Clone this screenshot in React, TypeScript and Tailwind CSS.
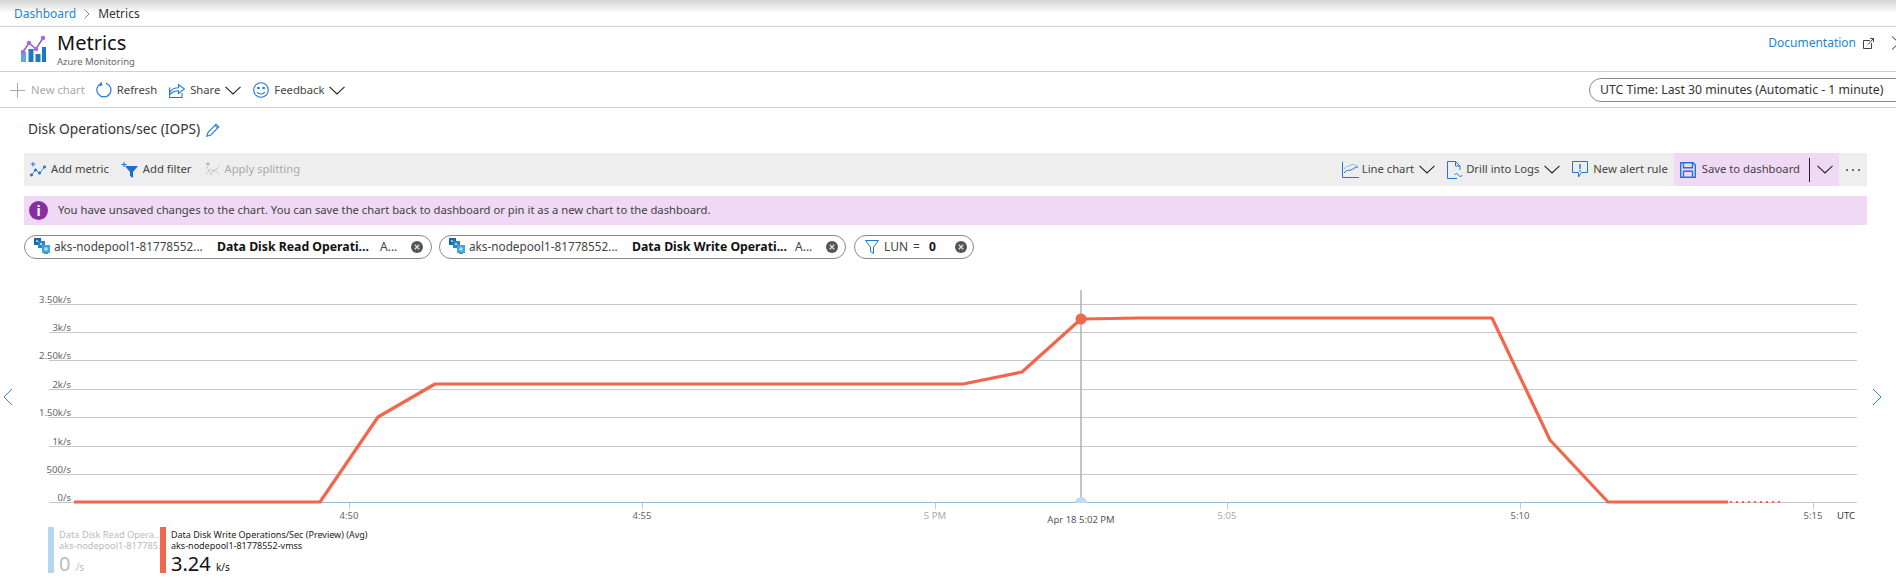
import React from "react";

const Chev = ({ className = "" }: { className?: string }) => (
  <svg width="16" height="9" viewBox="0 0 16 9" fill="none" stroke="#222" strokeWidth="1.1" className={className}>
    <path d="M.5 .8 8 8 15.5 .8" />
  </svg>
);

const Close = ({ className = "" }: { className?: string }) => (
  <svg width="12" height="12" viewBox="0 0 12 12" className={className}>
    <circle cx="6" cy="6" r="6" fill="#555" />
    <path d="M3.8 3.8 8.2 8.2M8.2 3.8 3.8 8.2" stroke="#ddd" strokeWidth="1.3" />
  </svg>
);

const Vmss = () => (
  <svg width="16" height="16" viewBox="0 0 16 16" className="shrink-0">
    <rect x="0" y="0" width="7" height="7" fill="#1668b0" />
    <rect x="4" y="3" width="7" height="7" fill="#2a86cf" />
    <rect x="8" y="7" width="8" height="8" fill="#3fa4e0" />
    <rect x="2" y="2" width="2" height="2" fill="#8cc8ef" />
    <rect x="6" y="5" width="2" height="2" fill="#a5dcf2" />
    <rect x="10.5" y="9.5" width="3" height="3" fill="#b9e6f7" />
    <rect x="10" y="15" width="4" height="1" fill="#7a7a7a" />
  </svg>
);

const MetricChip = ({ name, w }: { name: string; w: string }) => (
  <div className={`flex items-center h-[24px] rounded-full border border-[#8a8a8a] pl-[9px] ${w}`}>
    <div className="-mt-[3px]"><Vmss /></div>
    <span className="ml-[4px] w-[163px] whitespace-nowrap text-[11.75px]">aks-nodepool1-81778552...</span>
    <span className="font-bold text-[#111] whitespace-nowrap w-[163px] text-[12.25px]">{name}</span>
    <span className="w-[31px] whitespace-nowrap">A...</span>
    <Close />
  </div>
);

const yLabels = [
  ["3.50k/s", 304], ["3k/s", 332], ["2.50k/s", 360], ["2k/s", 389],
  ["1.50k/s", 417], ["1k/s", 446], ["500/s", 474],
] as const;

const xTicks: [string, number, string][] = [
  ["4:50", 349, "#666"], ["4:55", 642, "#666"], ["5 PM", 935, "#aaa"],
  ["5:05", 1227, "#aaa"], ["5:10", 1520, "#666"], ["5:15", 1813, "#666"],
];

const Chart = () => (
  <svg width="1896" height="248" viewBox="0 280 1896 248" className="block" fontFamily="'Noto Sans', sans-serif">
    {yLabels.map(([t, y]) => (
      <g key={t}>
        <line x1="49" x2="1857" y1={y + 0.5} y2={y + 0.5} stroke="#c8c8c8" strokeWidth="1" />
        <text x="71" y={y - 1} textAnchor="end" fontSize="9.5" fill="#666">{t}</text>
      </g>
    ))}
    <text x="71" y="501" textAnchor="end" fontSize="9.5" fill="#666">0/s</text>
    <line x1="49" x2="1857" y1="502.5" y2="502.5" stroke="#c8c8c8" />
    <line x1="74" x2="1728" y1="502.5" y2="502.5" stroke="#94b8d8" />
    {xTicks.map(([t, x, c]) => (
      <g key={t}>
        <line x1={x + 0.5} x2={x + 0.5} y1="503" y2="509" stroke="#c8c8c8" />
        <text x={x} y="519" textAnchor="middle" fontSize="9.5" fill={c}>{t}</text>
      </g>
    ))}
    <text x="1855" y="519" textAnchor="end" fontSize="9.5" fill="#333">UTC</text>
    <line x1="1081" x2="1081" y1="290" y2="503" stroke="#b0b0b0" strokeWidth="1.5" />
    <path d="M1075 503a6 6 0 0 1 12 0z" fill="#bcdcf3" />
    <circle cx="1081" cy="319" r="5.5" fill="#f2674b" />
    <polyline
      points="74,502 320,502 378,417 435,384 963,384 1022,372 1081,319 1140,318 1300,318 1492,318 1550,440 1608,502 1728,502"
      fill="none" stroke="#f2674b" strokeWidth="3.2" strokeLinejoin="round" />
    <line x1="1730" x2="1783" y1="502" y2="502" stroke="#f2674b" strokeWidth="2" strokeDasharray="2 4" />
    <text x="1081" y="523" textAnchor="middle" fontSize="9.5" fill="#555">Apr 18 5:02 PM</text>
  </svg>
);

export default function App() {
  return (
    <div className="relative w-[1896px] h-[584px] overflow-hidden bg-white text-[11.25px] text-[#444] font-['Noto_Sans',sans-serif]">
      {/* Breadcrumb */}
      <div className="h-[27px] flex items-center pl-[14px] pt-[2px] border-b border-[#cfcfcf] bg-gradient-to-b from-[#d4d4d4] via-white to-white via-50% gap-[8px] text-[12px]">
        <span className="text-[#1b85d8]">Dashboard</span>
        <svg width="6" height="10" viewBox="0 0 6 10" fill="none" stroke="#888"><path d="M.5 .5 5 5 .5 9.5" /></svg>
        <span className="text-[#333]">Metrics</span>
      </div>

      {/* Header */}
      <div className="h-[45px] flex border-b border-[#cfcfcf]">
        <svg width="26" height="28" viewBox="0 0 26 28" className="ml-[20px] mt-[8px] shrink-0">
          <rect x="1" y="17" width="5" height="10" fill="#5ea8e0" />
          <rect x="8.5" y="14" width="5" height="13" fill="#1e78c8" />
          <rect x="15.5" y="19" width="5" height="8" fill="#1e78c8" />
          <rect x="22" y="12" width="4" height="15" fill="#1e78c8" />
          <polyline points="3,17 9,8 16,14 23,3" fill="none" stroke="#9a5fd8" strokeWidth="1.6" />
          <circle cx="3" cy="17" r="2.3" fill="#a66be0" />
          <circle cx="9" cy="8" r="2.3" fill="#a66be0" />
          <circle cx="16" cy="14" r="2.3" fill="#a66be0" />
          <circle cx="23" cy="3" r="2.3" fill="#a66be0" />
        </svg>
        <div className="ml-[11px] mt-[3px]">
          <div className="text-[20px] leading-[26px] text-[#111]">Metrics</div>
          <div className="text-[9.5px] leading-[12px] text-[#666]">Azure Monitoring</div>
        </div>
        <div className="ml-auto flex items-start pt-[7px] text-[12px]">
          <span className="text-[#1b85d8] leading-[18px]">Documentation</span>
          <svg width="11" height="11" viewBox="0 0 11 11" fill="none" stroke="#444" className="ml-[7px] mt-[4px]">
            <path d="M7 2.5H.5v8h8V5M5 6.5 10.5.5M7 .5h3.5V4" />
          </svg>
          <svg width="4" height="14" viewBox="0 0 4 14" fill="none" stroke="#333" className="ml-[18px] mt-[2px]">
            <path d="M0 .5 7 7 0 13.5" />
          </svg>
        </div>
      </div>

      {/* Command bar */}
      <div className="h-[36px] flex items-center border-b border-[#cfcfcf] pl-[10px] pt-[1px]">
        <svg width="15" height="15" viewBox="0 0 15 15" stroke="#aaa"><path d="M7.5 0v15M0 7.5h15" /></svg>
        <span className="ml-[6px] text-[#aaa]">New chart</span>
        <svg width="16" height="16" viewBox="0 0 16 16" fill="none" stroke="#1b78d8" strokeWidth="1.2" className="ml-[11px]">
          <path d="M5.5 1.3A7 7 0 1 0 10 1.2M5 .3l.8 2.6-2.4.7" />
        </svg>
        <span className="ml-[5px]">Refresh</span>
        <svg width="16" height="16" viewBox="0 0 16 16" fill="none" stroke="#1b78d8" strokeWidth="1.1" className="ml-[12px]">
          <path d="M.6 5.5v10h12.5V11M.6 10.5C3 6.5 6 5.8 9.5 5.8V2.5L15.5 7l-6 4.5V8.8c-3 0-6 .6-8.9 4" />
        </svg>
        <span className="ml-[5px]">Share</span>
        <Chev className="ml-[5px]" />
        <svg width="16" height="16" viewBox="0 0 16 16" fill="none" stroke="#1b78d8" strokeWidth="1.1" className="ml-[12px]">
          <circle cx="8" cy="8" r="7.3" />
          <path d="M4 10c2 2.6 6 2.6 8 0" />
          <circle cx="5.4" cy="6" r=".8" fill="#1b78d8" />
          <circle cx="10.6" cy="6" r=".8" fill="#1b78d8" />
        </svg>
        <span className="ml-[5px]">Feedback</span>
        <Chev className="ml-[5px]" />
        <div className="ml-auto h-[24px] w-[320px] shrink-0 -mr-[13px] rounded-full border border-[#8a8a8a] flex items-center pl-[10px] text-[#333] whitespace-nowrap text-[12.25px]">
          UTC Time: Last 30 minutes (Automatic - 1 minute)
        </div>
      </div>

      {/* Title */}
      <div className="flex items-center h-[45px] pl-[28px] pb-[2px] text-[#333] text-[13.75px]">
        <span>Disk Operations/sec (IOPS)</span>
        <svg width="14" height="14" viewBox="0 0 14 14" fill="none" stroke="#1b78d8" strokeWidth="1.1" className="ml-[6px]">
          <path d="M.8 13.2 2 9.5 10 1.2l2.8 2.6-8 8.2zM9 2.3l2.7 2.6" />
        </svg>
      </div>

      {/* Toolbar */}
      <div className="mx-[24px] mr-[29px] h-[33px] bg-[#eeeeee] flex items-stretch pl-[6px] text-[#444]">
        <div className="flex items-center">
          <svg width="16" height="15" viewBox="0 0 16 15" fill="none" stroke="#1b78d8">
            <path d="M1.5 13 5.5 8l4 3 5-6" strokeWidth=".8" />
            <circle cx="1.5" cy="13" r="1.1" fill="#1b78d8" />
            <circle cx="5.5" cy="8" r="1.1" fill="#1b78d8" />
            <circle cx="9.5" cy="11" r="1.1" fill="#1b78d8" />
            <circle cx="14.5" cy="5" r="1.1" fill="#1b78d8" />
            <path d="M3 0v4.5M.8 2.2h4.5" strokeWidth="1" />
          </svg>
          <span className="ml-[5px]">Add metric</span>
          <svg width="17" height="16" viewBox="0 0 17 16" className="ml-[12px]">
            <path d="M4 4h13l-5 6v6l-3-2v-4z" fill="#1b6fc8" />
            <path d="M3 0v5M.5 2.5h5" stroke="#1b6fc8" />
          </svg>
          <span className="ml-[5px]">Add filter</span>
          <svg width="16" height="15" viewBox="0 0 16 15" fill="none" stroke="#aaa" className="ml-[12px]">
            <path d="M4 0v4M2 2h4" />
            <path d="M2 12 6 7l4 3 5-6" strokeDasharray="1.5 1.5" />
            <path d="M3 5l4 8 3-6 5 5" strokeDasharray="1.5 1.5" />
          </svg>
          <span className="ml-[5px] text-[#aaa]">Apply splitting</span>
        </div>
        <div className="ml-auto flex items-center">
          <svg width="17" height="16" viewBox="0 0 17 16" fill="none" stroke="#1b78d8">
            <path d="M.5 0v15.5H17" />
            <path d="M2 11c3-4 4-2 7-3s3-3 7-3" />
            <path d="M2 7c3-4 4-2 7-4s3 1 7 1" stroke="#7fb8e8" />
          </svg>
          <span className="ml-[3px]">Line chart</span>
          <Chev className="ml-[5px]" />
          <svg width="16" height="18" viewBox="0 0 16 18" fill="none" stroke="#1b78d8" className="ml-[12px]">
            <path d="M10 17.5H.5V.5h8l4.5 4.5v4M8.5.5V5H13" />
            <path d="M8 14c0-2 3-2 3 0M15 14c0 2-3 2-3 0" />
          </svg>
          <span className="ml-[3px]">Drill into Logs</span>
          <Chev className="ml-[5px]" />
          <svg width="16" height="17" viewBox="0 0 16 17" fill="none" stroke="#1b78d8" className="ml-[12px]">
            <path d="M.5.5h15v11H9.5l-3 4.5v-4.5h-6z" />
            <path d="M8 3v5M8 9v1.5" strokeWidth="1.4" />
          </svg>
          <span className="ml-[5px]">New alert rule</span>
          <div className="ml-[6px] self-stretch bg-[#efd9f5] flex items-center pl-[6px] pr-[6px]">
            <svg width="16" height="16" viewBox="0 0 16 16" fill="none" stroke="#1b78d8" strokeWidth="1.4">
              <path d="M.7.7h12.2l2.4 2.4v12.2H.7z" />
              <path d="M3.5.7v5h9v-5M3.5 15.3v-6h9v6" />
            </svg>
            <span className="ml-[6px]">Save to dashboard</span>
            <span className="ml-[9px] h-[24px] w-px bg-[#222]" />
            <Chev className="ml-[7px]" />
          </div>
          <svg width="16" height="4" viewBox="0 0 16 4" fill="#444" className="ml-[6px] mr-[6px]">
            <circle cx="2" cy="2" r="1" /><circle cx="8" cy="2" r="1" /><circle cx="14" cy="2" r="1" />
          </svg>
        </div>
      </div>

      {/* Banner */}
      <div className="mx-[24px] mr-[29px] mt-[10px] h-[29px] bg-[#efd9f5] flex items-center pl-[5px]">
        <div className="w-[19px] h-[19px] rounded-full bg-[#8a2da5] text-white font-bold text-[14px] flex items-center justify-center">i</div>
        <span className="ml-[10px]">You have unsaved changes to the chart. You can save the chart back to dashboard or pin it as a new chart to the dashboard.</span>
      </div>

      {/* Chips */}
      <div className="flex items-center mt-[10px] ml-[24px] gap-[7px] text-[#444] text-[12px]">
        <MetricChip name="Data Disk Read Operati..." w="w-[408px]" />
        <MetricChip name="Data Disk Write Operati..." w="w-[407px]" />
        <div className="flex items-center h-[24px] w-[120px] rounded-full border border-[#8a8a8a] pl-[10px] ml-[1px]">
          <svg width="14" height="14" viewBox="0 0 14 14" fill="none" stroke="#1b78d8"><path d="M.5 .5h13L8.5 7v6.5l-3-2V7z" /></svg>
          <span className="ml-[5px]">LUN</span>
          <span className="ml-[5px]">=</span>
          <span className="ml-[9px] font-bold text-[#111] w-[26px]">0</span>
          <Close />
        </div>
      </div>

      {/* Chart */}
      <div className="relative mt-[21px]">
        <Chart />
        <svg width="10" height="18" viewBox="0 0 10 18" fill="none" stroke="#2f7de0" className="absolute left-[3px] top-[108px]">
          <path d="M9 1 1 9l8 8" />
        </svg>
        <svg width="10" height="18" viewBox="0 0 10 18" fill="none" stroke="#2f7de0" className="absolute left-[1872px] top-[108px]">
          <path d="M1 1l8 8-8 8" />
        </svg>
      </div>

      {/* Legend */}
      <div className="flex ml-[48px] -mt-[1px]">
        <div className="flex w-[112px] h-[46px] border-l-[6px] border-[#b3d7f2] pl-[5px] shrink-0">
          <div className="text-[9.25px] leading-[11px] text-[#bbb] whitespace-nowrap pt-[2px]">
            <div>Data Disk Read Opera...</div>
            <div>aks-nodepool1-817785...</div>
            <div className="text-[20px] leading-[26px]">0 <span className="text-[10px]">/s</span></div>
          </div>
        </div>
        <div className="h-[46px] border-l-[6px] border-[#f2674b] pl-[5px] text-[9px] leading-[11px] text-[#222] whitespace-nowrap pt-[2px]">
          <div>Data Disk Write Operations/Sec (Preview) (Avg)</div>
          <div>aks-nodepool1-81778552-vmss</div>
          <div className="text-[20px] leading-[26px] text-[#111]">3.24 <span className="text-[10px]">k/s</span></div>
        </div>
      </div>
    </div>
  );
}
